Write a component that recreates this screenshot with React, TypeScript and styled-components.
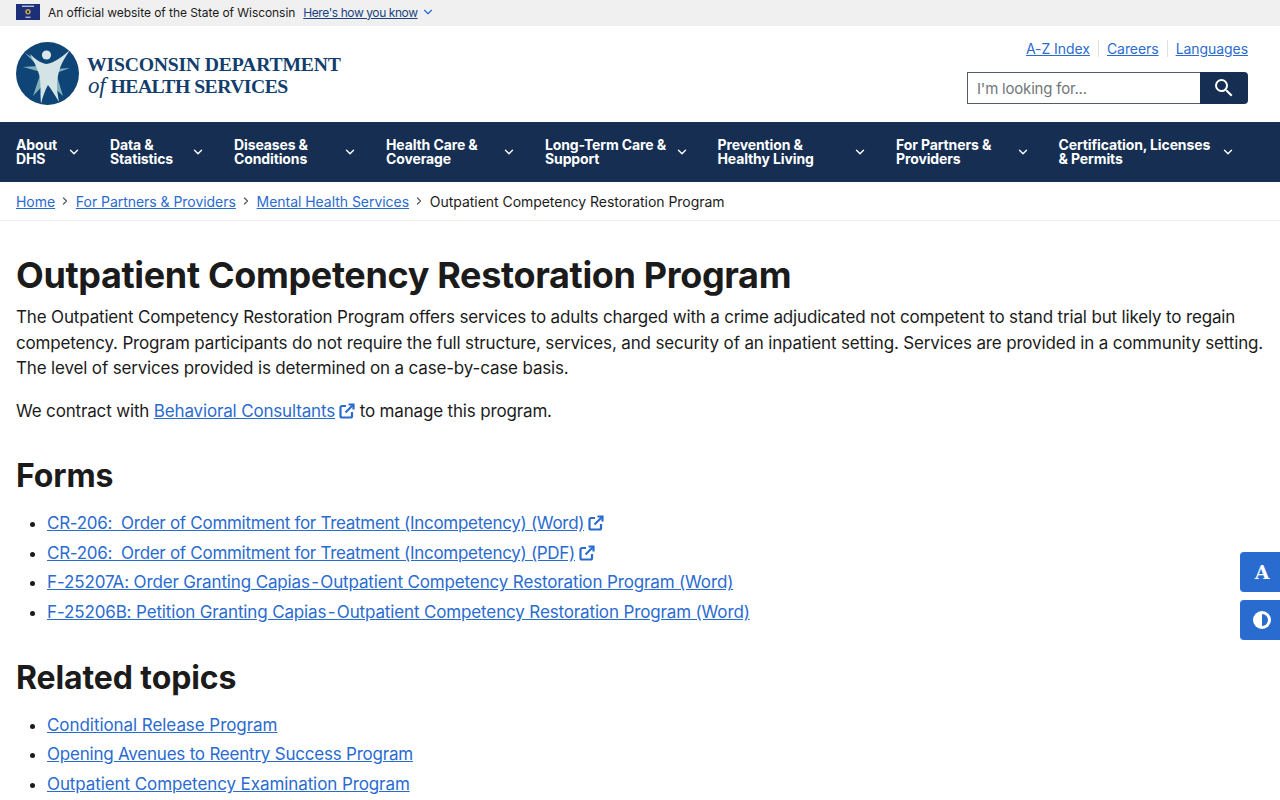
import React from 'react';
import styled, { createGlobalStyle } from 'styled-components';
import { ChevronDown, ChevronRight } from 'lucide-react';

const FONT = 'Inter, "Liberation Sans", sans-serif';

const GlobalStyle = createGlobalStyle`
  html, body {
    margin: 0;
    padding: 0;
    height: 800px;
    overflow: hidden;
    background: #fff;
    color: #1b1b1b;
    font-family: ${FONT};
  }
  * { box-sizing: border-box; }
`;

const BLUE = '#2a6bd0';
const NAVY = '#152e52';

const Banner = styled.div`
  height: 26px;
  background: #f0f0f0;
  display: flex;
  align-items: center;
  padding: 0 0 2px 16px;
  font-size: 12px;
  letter-spacing: -0.06px;
  color: #1b1b1b;
`;

const BannerText = styled.span`
  margin-left: 8px;
  margin-right: 8px;
`;

const BannerLink = styled.a`
  color: #1a4480;
  text-decoration: underline;
  letter-spacing: -0.42px;
`;

const BannerChevron = styled(ChevronDown)`
  color: #2a6bd0;
  margin-left: 3px;
`;

const Header = styled.header`
  height: 96px;
  display: flex;
  justify-content: space-between;
  padding: 0 32px 0 16px;
`;

const LogoBlock = styled.div`
  display: flex;
  align-items: center;
  gap: 8px;
  height: 95px;
`;

const LogoText = styled.div`
  font-family: "Liberation Serif", serif;
  font-weight: 700;
  color: #123e6e;
  font-size: 19.7px;
  line-height: 22px;
  letter-spacing: -0.2px;
  padding-top: 3px;
`;

const LogoOf = styled.i`
  font-weight: 400;
  font-size: 23px;
  margin: 0 5px 0 1px;
`;

const LogoSecondLine = styled.span`
  letter-spacing: -0.53px;
`;

const HeaderRight = styled.div`
  display: flex;
  flex-direction: column;
  align-items: flex-end;
  padding-top: 13px;
`;

const TopLinks = styled.div`
  display: flex;
  align-items: center;
  height: 18px;
  font-size: 14px;
  letter-spacing: -0.06px;
`;

const TopLink = styled.a<{ $divided?: boolean }>`
  color: ${BLUE};
  text-decoration: underline;
  ${({ $divided }) => $divided && `
    border-left: 1px solid #dfe1e2;
    margin-left: 8px;
    padding-left: 8px;
  `}
`;

const SearchForm = styled.div`
  display: flex;
  margin-top: 15px;
  width: 281px;
  height: 32px;
`;

const SearchInput = styled.div`
  flex: 1;
  border: 1px solid #565c65;
  border-right: none;
  display: flex;
  align-items: center;
  padding-left: 9px;
  color: #71767a;
  font-size: 15px;
  letter-spacing: -0.2px;
`;

const SearchButton = styled.div`
  width: 48px;
  background: ${NAVY};
  color: #fff;
  border-radius: 0 4px 4px 0;
  display: flex;
  align-items: center;
  justify-content: center;
`;

const Nav = styled.nav`
  height: 60px;
  background: ${NAVY};
  display: flex;
  padding-left: 16px;
`;

const NavItem = styled.div<{ $width: number }>`
  width: ${({ $width }) => $width}px;
  display: flex;
  align-items: center;
  justify-content: space-between;
  padding-right: 29px;
  color: #fff;
  font-weight: 700;
  font-size: 14px;
  line-height: 14px;
  letter-spacing: -0.12px;

  &:last-child {
    padding-right: 20px;
  }
`;

const NavChevron = styled(ChevronDown)`
  flex: none;
  stroke-width: 2.4;
`;

const Crumbs = styled.div`
  height: 39px;
  border-bottom: 1px solid #eceef0;
  display: flex;
  align-items: center;
  padding-left: 16px;
  font-size: 14px;
  letter-spacing: -0.04px;
`;

const CrumbLink = styled.a`
  color: ${BLUE};
  text-decoration: underline;
`;

const CrumbArrow = styled(ChevronRight)`
  color: #565c65;
  margin: 0 4.4px;
  stroke-width: 2.6;
`;

const Main = styled.main`
  padding: 34px 8px 0 16px;
`;

const Title = styled.h1`
  margin: 0 0 10px;
  font-size: 36px;
  line-height: 40px;
  font-weight: 700;
  letter-spacing: -0.35px;
`;

const Para = styled.p`
  margin: 0 0 17px;
  font-size: 17px;
  line-height: 25.5px;
  letter-spacing: -0.16px;
`;

const SectionTitle = styled.h2<{ $top: number }>`
  margin: ${({ $top }) => $top}px 0 15px;
  font-size: 32px;
  line-height: 36px;
  font-weight: 700;
  letter-spacing: -0.1px;
`;

const List = styled.ul`
  margin: 0;
  padding: 0 0 0 31px;
  font-size: 17px;
  line-height: 29.67px;
`;

const BodyLink = styled.a<{ $spacing?: number }>`
  color: ${BLUE};
  text-decoration: underline;
  ${({ $spacing }) => $spacing !== undefined && `letter-spacing: ${$spacing}px;`}
`;

const ExternalIcon = styled.svg`
  display: inline-block;
  vertical-align: -2px;
  margin-left: 4px;
  fill: none;
  stroke: ${BLUE};
  stroke-width: 2.2;
`;

const SideTools = styled.div`
  position: fixed;
  right: 0;
  top: 552px;
  display: flex;
  flex-direction: column;
  gap: 8px;
`;

const SideButton = styled.div`
  width: 40px;
  height: 40px;
  padding-left: 4px;
  background: ${BLUE};
  border-radius: 4px 0 0 4px;
  display: flex;
  align-items: center;
  justify-content: center;
  color: #fff;
`;

const SideLetter = styled.span`
  font-family: "DejaVu Serif", serif;
  font-weight: 700;
  font-size: 19px;
`;

function Flag() {
  return (
    <svg width="24" height="16" viewBox="0 0 24 16" aria-hidden="true">
      <rect width="24" height="16" fill="#1c2f78" />
      <rect x="6" y="1.6" width="12" height="1.2" fill="#d9d9e6" />
      <circle cx="12" cy="7.8" r="2.7" fill="#b9a45a" />
      <rect x="11" y="6.6" width="2" height="2.4" fill="#33381f" />
      <rect x="9.5" y="12.6" width="5" height="1.2" fill="#c9c9d6" />
    </svg>
  );
}

function Logo() {
  return (
    <svg width="63" height="63" viewBox="0 0 63 63" aria-hidden="true">
      <circle cx="31.5" cy="31.5" r="31.5" fill="#0f4477" />
      <path
        d="M9 11 L27 22 L40 27 L54 26 L40 31 L47 54 L31 39 L17 54 L25 30 L7 25 L22 24 Z"
        fill="#7fb1bb"
      />
      <path
        d="M14 12 C20 18 25 21 30 22 C38 21 46 15 54 8 C50 14 46 20 44 26 C42 32 41 38 41 44 C41 49 42 54 43 60 C39 53 35 47 32 43 C29 48 27 54 25 62 C24 53 25 44 24 36 C23 31 21 27 19 22 Z"
        fill="#d3e3e6"
      />
      <circle cx="30.5" cy="13" r="4.6" fill="#d9e6ea" />
    </svg>
  );
}

function External() {
  return (
    <ExternalIcon width="16" height="16" viewBox="0 0 16 16" aria-hidden="true">
      <path d="M7 3 H3 A1.5 1.5 0 0 0 1.5 4.5 V13 A1.5 1.5 0 0 0 3 14.5 H11.5 A1.5 1.5 0 0 0 13 13 V9" />
      <path d="M6.5 9.5 L14 2" />
      <path d="M9.5 1.5 H14.5 V6.5" />
    </ExternalIcon>
  );
}

const NAV_ITEMS: [string[], number][] = [
  [['About', 'DHS'], 94],
  [['Data &', 'Statistics'], 124],
  [['Diseases &', 'Conditions'], 152],
  [['Health Care &', 'Coverage'], 159],
  [['Long-Term Care &', 'Support'], 172.5],
  [['Prevention &', 'Healthy Living'], 178.5],
  [['For Partners &', 'Providers'], 162.5],
  [['Certification, Licenses', '& Permits'], 196],
];

const FORMS: [string, boolean, number][] = [
  ['CR-206:\u00a0 Order of Commitment for Treatment (Incompetency) (Word)', true, -0.29],
  ['CR-206:\u00a0 Order of Commitment for Treatment (Incompetency) (PDF)', true, -0.29],
  ['F-25207A: Order Granting Capias\u200a-\u200aOutpatient Competency Restoration Program (Word)', false, -0.14],
  ['F-25206B: Petition Granting Capias\u200a-\u200aOutpatient Competency Restoration Program (Word)', false, -0.14],
];

const TOPICS: [string, number][] = [
  ['Conditional Release Program', -0.06],
  ['Opening Avenues to Reentry Success Program', -0.22],
  ['Outpatient Competency Examination Program', -0.09],
];

export default function App() {
  return (
    <>
      <GlobalStyle />
      <Banner>
        <Flag />
        <BannerText>An official website of the State of Wisconsin</BannerText>
        <BannerLink>Here's how you know</BannerLink>
        <BannerChevron size={14} />
      </Banner>
      <Header>
        <LogoBlock>
          <Logo />
          <LogoText>
            WISCONSIN DEPARTMENT
            <br />
            <LogoOf>of</LogoOf>
            <LogoSecondLine>HEALTH SERVICES</LogoSecondLine>
          </LogoText>
        </LogoBlock>
        <HeaderRight>
          <TopLinks>
            <TopLink>A-Z Index</TopLink>
            <TopLink $divided>Careers</TopLink>
            <TopLink $divided>Languages</TopLink>
          </TopLinks>
          <SearchForm>
            <SearchInput>I'm looking for...</SearchInput>
            <SearchButton>
              <svg width="24" height="24" viewBox="0 0 24 24" fill="currentColor" aria-hidden="true">
                <path d="M15.5 14h-.79l-.28-.27A6.471 6.471 0 0 0 16 9.5 6.5 6.5 0 1 0 9.5 16c1.61 0 3.09-.59 4.23-1.57l.27.28v.79l5 4.99L20.49 19l-4.99-5zm-6 0C7.01 14 5 11.99 5 9.5S7.01 5 9.5 5 14 7.01 14 9.5 11.99 14 9.5 14z" />
              </svg>
            </SearchButton>
          </SearchForm>
        </HeaderRight>
      </Header>
      <Nav>
        {NAV_ITEMS.map(([lines, width]) => (
          <NavItem key={lines[0]} $width={width}>
            <span>
              {lines[0]}
              <br />
              {lines[1]}
            </span>
            <NavChevron size={14} />
          </NavItem>
        ))}
      </Nav>
      <Crumbs>
        <CrumbLink>Home</CrumbLink>
        <CrumbArrow size={12} />
        <CrumbLink>For Partners &amp; Providers</CrumbLink>
        <CrumbArrow size={12} />
        <CrumbLink>Mental Health Services</CrumbLink>
        <CrumbArrow size={12} />
        <span>Outpatient Competency Restoration Program</span>
      </Crumbs>
      <Main>
        <Title>Outpatient Competency Restoration Program</Title>
        <Para>
          The Outpatient Competency Restoration Program offers services to adults charged with a crime adjudicated not
          competent to stand trial but likely to regain competency. Program participants do not require the full
          structure, services, and security of an inpatient setting. Services are provided in a community setting. The
          level of services provided is determined on a case-by-case basis.
        </Para>
        <Para>
          We contract with <BodyLink>Behavioral Consultants</BodyLink>
          <External /> to manage this program.
        </Para>
        <SectionTitle $top={34}>Forms</SectionTitle>
        <List>
          {FORMS.map(([label, external, spacing]) => (
            <li key={label}>
              <BodyLink $spacing={spacing}>{label}</BodyLink>
              {external && <External />}
            </li>
          ))}
        </List>
        <SectionTitle $top={32}>Related topics</SectionTitle>
        <List>
          {TOPICS.map(([label, spacing]) => (
            <li key={label}>
              <BodyLink $spacing={spacing}>{label}</BodyLink>
            </li>
          ))}
        </List>
      </Main>
      <SideTools>
        <SideButton>
          <SideLetter>A</SideLetter>
        </SideButton>
        <SideButton>
          <svg width="18" height="18" viewBox="0 0 18 18" aria-hidden="true">
            <circle cx="9" cy="9" r="9" fill="#fff" />
            <path d="M9 3 A6 6 0 0 1 9 15 Z" fill="#2a6bd0" />
          </svg>
        </SideButton>
      </SideTools>
    </>
  );
}
